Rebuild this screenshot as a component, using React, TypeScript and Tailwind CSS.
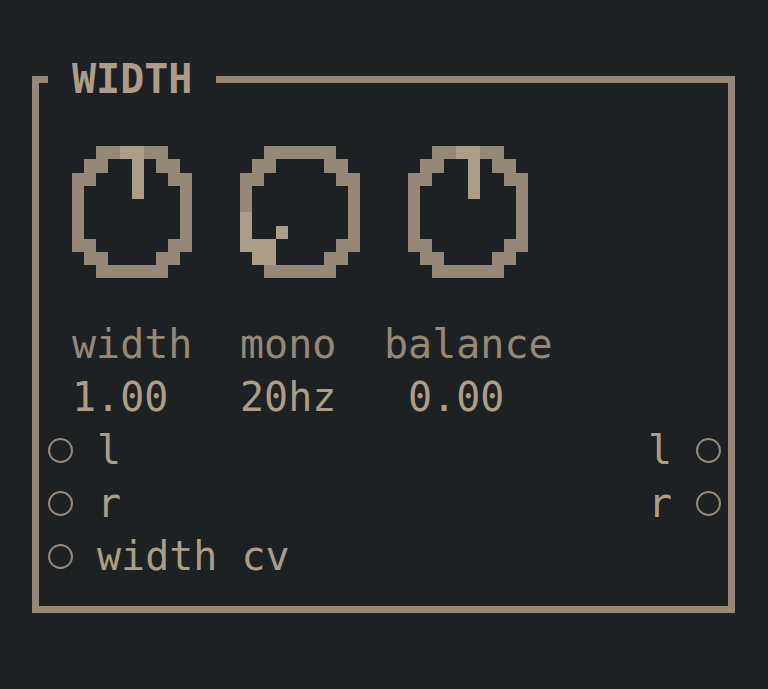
import React from 'react'

const RING = '#958877'
const LIT = '#ab9d88'

const knobUp = [
  '..ooHHoo..',
  '.oo..H.oo.',
  'oo...H..oo',
  'o....H...o',
  'o........o',
  'o........o',
  'o........o',
  'oo......oo',
  '.oo....oo.',
  '..oooooo..',
]

const knobLow = [
  '..oooooo..',
  '.oo....oo.',
  'oo......oo',
  'o........o',
  'o........o',
  'H........o',
  'H..H.....o',
  'HHH.....oo',
  '.HH....oo.',
  '..oooooo..',
]

function Knob({ rows }: { rows: string[] }) {
  return (
    <svg
      width={120}
      height={132.5}
      viewBox="0 0 10 10"
      preserveAspectRatio="none"
      shapeRendering="crispEdges"
      className="block shrink-0"
    >
      {rows.map((row, y) =>
        row.split('').map((c, x) =>
          c === '.' ? null : (
            <rect key={`${x}-${y}`} x={x} y={y} width={1} height={1} fill={c === 'H' ? LIT : RING} />
          )
        )
      )}
    </svg>
  )
}

function Port() {
  return <span className="block w-[25px] h-[25px] rounded-full border-2 border-[#958877] shrink-0" />
}

export default function App() {
  return (
    <div
      className="min-h-[689px] w-full bg-[#1e2123] pt-[53px] pl-[32px] text-[40px] leading-[53px] text-[#ab9d88]"
      style={{ fontFamily: '"DejaVu Sans Mono", "Liberation Mono", monospace' }}
    >
      <fieldset className="w-[703px] border-[7px] border-[#958877] pl-[9px] pr-[8px] pb-[23px]">
        <legend className="px-[24px] font-bold h-[53px] leading-[53px]">WIDTH</legend>

        {/* knobs */}
        <div className="h-[212px] flex items-start gap-[48px] pl-[24px] pt-[39.75px]">
          <Knob rows={knobUp} />
          <Knob rows={knobLow} />
          <Knob rows={knobUp} />
        </div>

        {/* labels */}
        <div className="flex h-[53px] pl-[24px] text-[#958877] whitespace-pre">
          <span className="w-[168px]">width</span>
          <span className="w-[144px]">mono</span>
          <span>balance</span>
        </div>
        <div className="flex h-[53px] pl-[24px] whitespace-pre">
          <span className="w-[168px]">1.00</span>
          <span className="w-[168px]">20hz</span>
          <span>0.00</span>
        </div>

        {/* ports */}
        <div className="flex items-center h-[53px]">
          <Port />
          <span className="ml-[24px] flex-1">l</span>
          <span className="w-[24px]">l</span>
          <span className="ml-[24px] w-[24px] flex justify-center"><Port /></span>
        </div>
        <div className="flex items-center h-[53px]">
          <Port />
          <span className="ml-[24px] flex-1">r</span>
          <span className="w-[24px]">r</span>
          <span className="ml-[24px] w-[24px] flex justify-center"><Port /></span>
        </div>
        <div className="flex items-center h-[53px] whitespace-pre">
          <Port />
          <span className="ml-[24px]">width cv</span>
        </div>
      </fieldset>
    </div>
  )
}
